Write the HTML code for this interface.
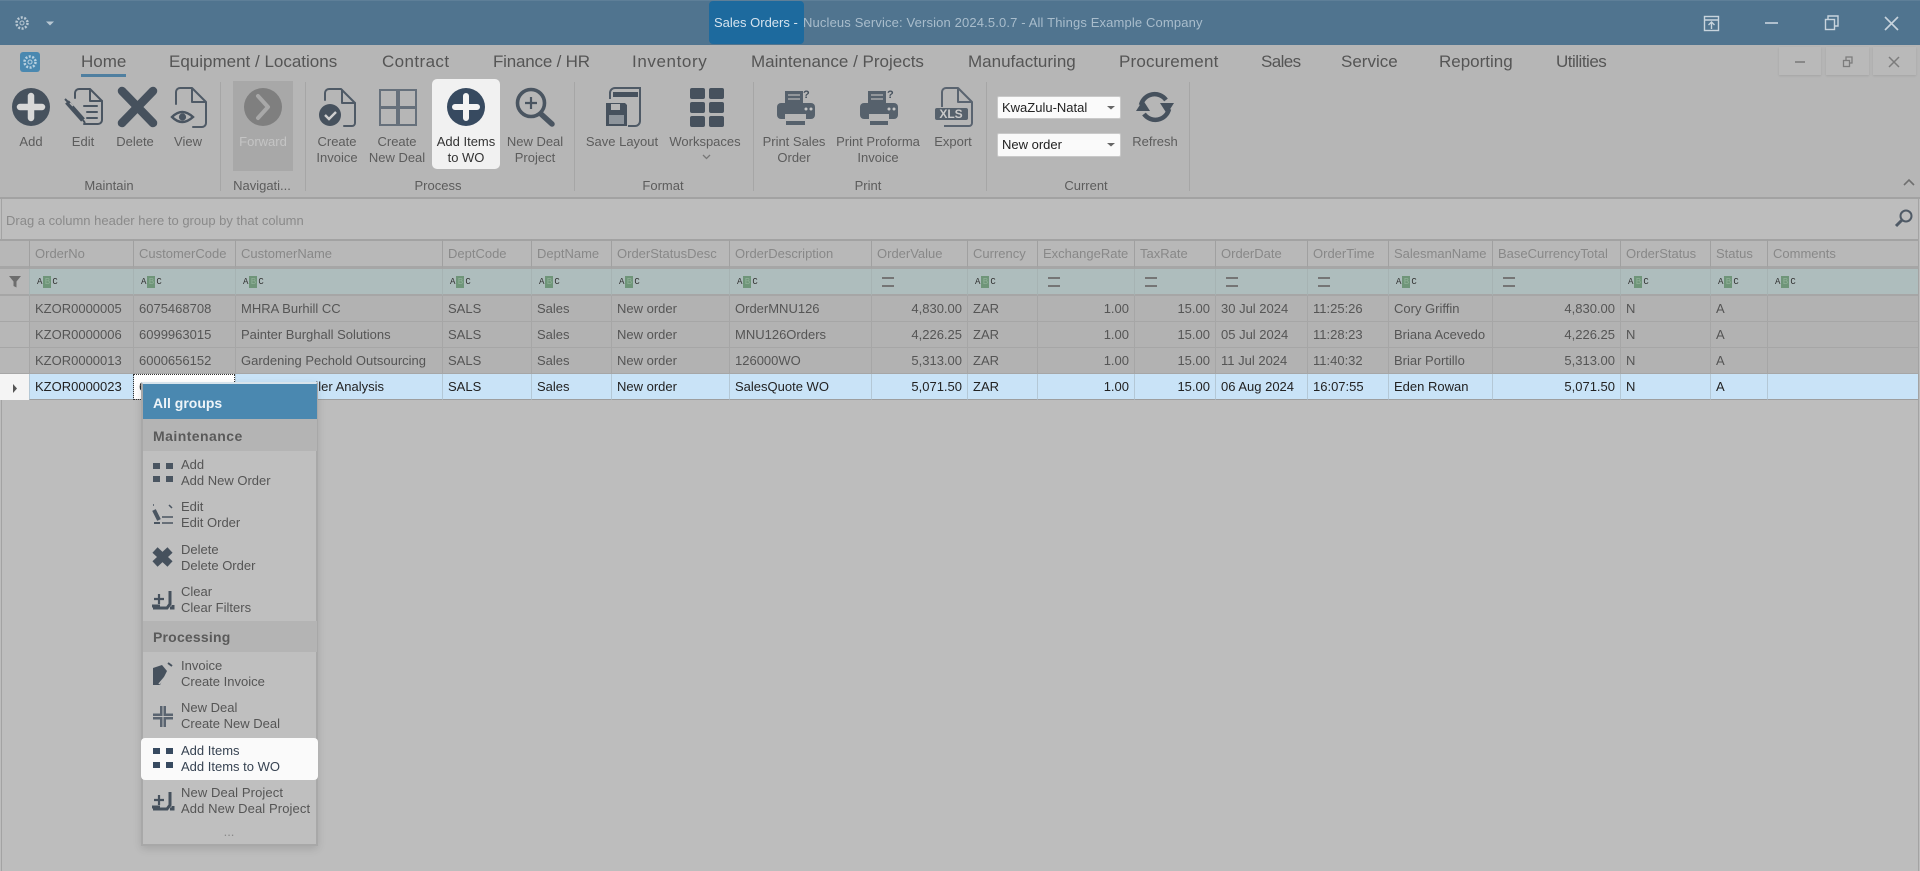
<!DOCTYPE html>
<html><head><meta charset="utf-8"><title>Sales Orders</title>
<style>
html,body{margin:0;padding:0;width:1920px;height:871px;overflow:hidden;background:#bdbdbd;font-family:"Liberation Sans",sans-serif;font-size:13px;color:#555}
div,span,svg,table,td,th{box-sizing:border-box}
.a{position:absolute;white-space:nowrap;line-height:16px}
.c{position:absolute;white-space:nowrap;line-height:16px;transform:translateX(-50%);text-align:center}
.tab{position:absolute;top:52px;font-size:17px;line-height:20px;color:#555;white-space:nowrap}
.g{color:#5c5c5c}
.sep{position:absolute;width:1px;top:82px;height:109px;background:#a6a6a6}
table{position:absolute;left:0;top:239px;width:1918px;border-collapse:separate;border-spacing:0;table-layout:fixed}
td,th{padding:0 5px;font-weight:normal;text-align:left;white-space:nowrap;overflow:hidden;font-size:13px}
.hd th{height:30px;background:#b8b8b8;color:#888;border-top:2px solid #a2a2a2;border-bottom:3px solid #a6a6a6;border-left:1px solid #a0a0a0}
.fl td{height:27px;background:#aebdbd;border-left:1px solid #a6b3b3;border-bottom:2px solid #a6a6a6;padding-left:7px;line-height:20px}
.r td{height:26px;background:#b2b2b2;border-left:1px solid #a6a6a6;border-bottom:1px solid #a6a6a6;color:#555}
.r td.ind,.fl td.ind,.hd th.ind{background:#b7b7b7;border-left:0}
.s td{height:26px;background:#c9e3f7;border-left:1px solid #b4c8d6;border-bottom:1px solid #9e9e9e;color:#222}
.s td.ind{background:#f4f4f4;border-left:0;border-bottom:0}
.n{text-align:right}
.abc{display:inline-block;height:12px;line-height:12px;font-size:9px;font-style:normal;color:#333;font-family:"Liberation Mono",monospace;vertical-align:middle;letter-spacing:0}
.abc u{display:inline-block;width:8px;height:12px;background:#6f9579;color:#8fb097;text-decoration:none;text-align:center;margin:0 1px}
.eq{display:inline-block;width:12px;height:6px;border-top:2px solid #757575;border-bottom:2px solid #757575;margin-left:3px;vertical-align:middle}
.pop{position:absolute;left:141px;top:382px;width:177px;height:464px;background:#bfbfbf;border:2px solid #a8a8a8;border-top-color:#d8e4ec;box-shadow:0 3px 8px rgba(0,0,0,.12)}
</style></head><body>

<div style="position:absolute;left:0;top:0;width:1920px;height:45px;background:#50748f;border-top:1px solid #5e7f98"></div>
<div style="position:absolute;left:709px;top:1px;width:95px;height:43px;background:#1d6a9e;border-radius:4px"></div>
<div class="a" style="left:714px;top:15px;color:#d5e3ee">Sales Orders -</div>
<div class="a" style="left:803px;top:15px;color:#a9bdcc;letter-spacing:.14px">Nucleus Service: Version 2024.5.0.7 - All Things Example Company</div>

<div style="position:absolute;left:0;top:45px;width:1920px;height:154px;background:#b6b6b6;border-bottom:2px solid #a2a2a2"></div>
<div style="position:absolute;left:20px;top:52px;width:20px;height:20px;background:#4a88b0;border-radius:3px"></div>

<div class="tab" style="left:81px">Home</div>
<div style="position:absolute;left:81px;top:74px;width:45px;height:3px;background:#4f7fa0"></div>
<div class="tab" style="left:169px">Equipment / Locations</div>
<div class="tab" style="left:382px;letter-spacing:.4px">Contract</div>
<div class="tab" style="left:493px;letter-spacing:-.2px">Finance / HR</div>
<div class="tab" style="left:632px;letter-spacing:.6px">Inventory</div>
<div class="tab" style="left:751px">Maintenance / Projects</div>
<div class="tab" style="left:968px">Manufacturing</div>
<div class="tab" style="left:1119px;letter-spacing:.2px">Procurement</div>
<div class="tab" style="left:1261px;letter-spacing:-.6px">Sales</div>
<div class="tab" style="left:1341px">Service</div>
<div class="tab" style="left:1439px">Reporting</div>
<div class="tab" style="left:1556px;letter-spacing:-.5px">Utilities</div>

<div style="position:absolute;left:1779px;top:47px;width:42px;height:28px;background:#b9b9b9;box-shadow:0 1px 2px #a4a4a4"></div>
<div style="position:absolute;left:1826px;top:47px;width:43px;height:28px;background:#b9b9b9;box-shadow:0 1px 2px #a4a4a4"></div>
<div style="position:absolute;left:1873px;top:47px;width:43px;height:28px;background:#b9b9b9;box-shadow:0 1px 2px #a4a4a4"></div>

<div class="sep" style="left:220px"></div><div class="sep" style="left:305px"></div><div class="sep" style="left:574px"></div><div class="sep" style="left:753px"></div><div class="sep" style="left:986px"></div><div class="sep" style="left:1189px"></div>

<div style="position:absolute;left:233px;top:81px;width:60px;height:90px;background:#a8a8a8"></div>
<div style="position:absolute;left:432px;top:79px;width:68px;height:90px;background:#f1f1f1;border-radius:5px"></div>

<svg style="position:absolute;left:0;top:0" width="1920" height="200" viewBox="0 0 1920 200" fill="none">
<g stroke="#b9c8d3"><circle cx="22" cy="23" r="5.5" stroke-width="2.5" stroke-dasharray="2 1.5"/><circle cx="22" cy="23" r="2" stroke-width="1"/></g>
<path d="M46 21.5h8l-4 4z" fill="#b9c8d3"/>
<g stroke="#b7d0e0"><circle cx="30" cy="62" r="5.5" stroke-width="2.5" stroke-dasharray="2 1.5"/><circle cx="30" cy="62" r="2" stroke-width="1"/></g>
<g stroke="#c8d4dd" stroke-width="1.4">
<rect x="1704.5" y="16.5" width="14" height="14"/><path d="M1705 20h13M1711.5 29v-7M1708.5 25l3-3 3 3"/>
<path d="M1765 23h13" stroke-width="1.6"/>
<rect x="1825.5" y="19.5" width="9" height="10"/><path d="M1828 19v-3h10v10h-3"/>
<path d="M1885 17l13 13M1898 17l-13 13" stroke-width="1.6"/>
</g>
<g stroke="#7c7c7c" stroke-width="1.3">
<path d="M1795 62h10" stroke-width="1.6"/>
<rect x="1843.5" y="60.5" width="6" height="6"/><path d="M1846 60v-3h6v6h-2"/>
<path d="M1889 57l10 10M1899 57l-10 10" stroke-width="1.5"/>
</g>
<path d="M1904 185l5-5 5 5" stroke="#6f6f6f" stroke-width="1.6"/>

<circle cx="31" cy="107" r="19" fill="#46515d"/><path d="M31 96v22M20 107h22" stroke="#d8d8d8" stroke-width="6.5" stroke-linecap="round"/>
<g stroke="#4a5561" stroke-width="2" stroke-linecap="round" stroke-linejoin="round">
<path d="M75 98v-5a4 4 0 0 1 4-4h11l12 12v19a4 4 0 0 1-4 4h-14"/><path d="M90 90v11h12"/>
<path d="M84 106h13M87 112h10M87 118h10"/></g>
<path d="M67 102l16 18" stroke="#46515d" stroke-width="5"/><path d="M65 99l4 4M83 120l2 3" stroke="#46515d" stroke-width="2"/><path d="M70 103l3 3" stroke="#b6b6b6" stroke-width="1.5"/>
<path d="M122 91l31 32M153 91l-31 32" stroke="#46515d" stroke-width="8.5" stroke-linecap="round"/>
<g stroke="#4f5a66" stroke-width="2" stroke-linecap="round" stroke-linejoin="round">
<path d="M176 104V92a4 4 0 0 1 4-4h12l14 14v21a4 4 0 0 1-4 4h-9"/><path d="M192 89v13h13"/></g>
<path d="M172 117q10-10 21 0q-11 10-21 0z" stroke="#4a5561" stroke-width="2.4"/><circle cx="182.500" cy="117" r="3.600" fill="#4a5561"/>
<circle cx="263" cy="107" r="19" fill="#7f7f7f"/><path d="M258 96l10 11-10 11" stroke="#a8a8a8" stroke-width="4" stroke-linecap="round" stroke-linejoin="round"/>
<g stroke="#4f5a66" stroke-width="2" stroke-linecap="round" stroke-linejoin="round">
<path d="M325 100v-7a4 4 0 0 1 4-4h12l14 14v20a3 3 0 0 1-3 3h-8"/><path d="M342 90v13h13"/></g>
<circle cx="330" cy="115" r="11" fill="#46515d"/><path d="M325 115l4 4 7-7" stroke="#cfcfcf" stroke-width="2.4"/>
<g stroke="#66707b" stroke-width="2"><rect x="380" y="90" width="17" height="17"/><rect x="399" y="90" width="17" height="17"/><rect x="380" y="108" width="17" height="17"/><rect x="399" y="108" width="17" height="17"/></g>
<circle cx="466" cy="107" r="19" fill="#374a60"/><path d="M466 96v22M455 107h22" stroke="#f4f4f4" stroke-width="6" stroke-linecap="round"/>
<circle cx="531" cy="103" r="13.500" stroke="#4a5561" stroke-width="3.600"/><path d="M531 97v12M525 103h12" stroke="#4a5561" stroke-width="2.200"/><path d="M541 114l11 10" stroke="#4a5561" stroke-width="5.500" stroke-linecap="round"/>
<path d="M610 99v-6a5 5 0 0 1 5-5h25v33a5 5 0 0 1-5 5h-7" stroke="#4f5a66" stroke-width="2"/>
<rect x="613" y="92" width="25" height="5" fill="#46515d"/>
<path d="M606 103h19l2 2v21h-21z" fill="#46515d"/><rect x="611" y="104" width="9" height="6" fill="#b6b6b6"/><rect x="609" y="115" width="15" height="9" fill="#8d949b"/>
<g fill="#46515d"><rect x="690" y="88" width="15" height="11" rx="2"/><rect x="709" y="88" width="15" height="11" rx="2"/><rect x="690" y="102" width="15" height="11" rx="2"/><rect x="709" y="102" width="15" height="11" rx="2"/><rect x="690" y="116" width="15" height="11" rx="2"/><rect x="709" y="116" width="15" height="11" rx="2"/></g>
<path d="M703 155l3.500 3.500 3.500-3.500" stroke="#777" stroke-width="1.300"/>
<rect x="785" y="91" width="18" height="14" fill="#56616c"/><path d="M788 95h12M788 99h12" stroke="#b6b6b6" stroke-width="1.300"/><rect x="777" y="103" width="38" height="16" rx="4" fill="#56616c"/><rect x="785" y="114" width="21" height="12" fill="#b6b6b6"/><rect x="786" y="121" width="19" height="4" fill="#56616c"/><circle cx="806" cy="109" r="1.500" fill="#c5c5c5"/><circle cx="811" cy="109" r="1.500" fill="#c5c5c5"/>
<rect x="868" y="91" width="18" height="14" fill="#56616c"/><path d="M871 95h12M871 99h12" stroke="#b6b6b6" stroke-width="1.300"/><rect x="860" y="103" width="38" height="16" rx="4" fill="#56616c"/><rect x="869" y="114" width="20" height="12" fill="#b6b6b6"/><rect x="870" y="121" width="18" height="4" fill="#56616c"/><circle cx="889" cy="109" r="1.500" fill="#c5c5c5"/><circle cx="894" cy="109" r="1.500" fill="#c5c5c5"/>
<g stroke="#5a6470" stroke-width="2" stroke-linejoin="round"><path d="M942 107V92a4 4 0 0 1 4-4h12l14 14v21a3 3 0 0 1-3 3h-25"/><path d="M958 89v13h13"/></g>
<rect x="935" y="108" width="33" height="12" rx="2" fill="#56616c"/>
<path d="M1141 105a14 14 0 0 1 25-5" stroke="#46515d" stroke-width="4.500"/><path d="M1160 103h14l-7 11z" fill="#46515d"/>
<path d="M1169 109a14 14 0 0 1-25 5" stroke="#46515d" stroke-width="4.500"/><path d="M1150 111h-14l7-11z" fill="#46515d"/>
</svg>

<div class="a" style="left:803px;top:87px;font-size:11px;font-weight:bold;color:#46515d">?</div>
<div class="a" style="left:887px;top:87px;font-size:11px;font-weight:bold;color:#46515d">?</div>
<div class="c" style="left:951px;top:106px;font-size:12px;font-weight:bold;color:#c9c9c9">XLS</div>

<div class="c g" style="left:31px;top:134px">Add</div>
<div class="c g" style="left:83px;top:134px">Edit</div>
<div class="c g" style="left:135px;top:134px">Delete</div>
<div class="c g" style="left:188px;top:134px">View</div>
<div class="c" style="left:263px;top:134px;color:#c4c4c4">Forward</div>
<div class="c g" style="left:337px;top:134px">Create<br>Invoice</div>
<div class="c g" style="left:397px;top:134px">Create<br>New Deal</div>
<div class="c" style="left:466px;top:134px;color:#333">Add Items<br>to WO</div>
<div class="c g" style="left:535px;top:134px">New Deal<br>Project</div>
<div class="c g" style="left:622px;top:134px">Save Layout</div>
<div class="c g" style="left:705px;top:134px">Workspaces</div>
<div class="c g" style="left:794px;top:134px">Print Sales<br>Order</div>
<div class="c g" style="left:878px;top:134px">Print Proforma<br>Invoice</div>
<div class="c g" style="left:953px;top:134px">Export</div>
<div class="c g" style="left:1155px;top:134px">Refresh</div>

<div class="c g" style="left:109px;top:178px">Maintain</div>
<div class="c g" style="left:262px;top:178px">Navigati...</div>
<div class="c g" style="left:438px;top:178px">Process</div>
<div class="c g" style="left:663px;top:178px">Format</div>
<div class="c g" style="left:868px;top:178px">Print</div>
<div class="c g" style="left:1086px;top:178px">Current</div>

<div style="position:absolute;left:997px;top:96px;width:124px;height:23px;background:#fafafa;border:1px solid #c9c9c9;border-radius:2px"></div>
<div class="a" style="left:1002px;top:100px;color:#222">KwaZulu-Natal</div>
<div style="position:absolute;left:997px;top:133px;width:124px;height:24px;background:#fafafa;border:1px solid #c9c9c9;border-radius:2px"></div>
<div class="a" style="left:1002px;top:137px;color:#222">New order</div>
<svg style="position:absolute;left:1105px;top:100px" width="12" height="50"><path d="M2 6h8l-4 3.500zM2 43h8l-4 3.500z" fill="#666"/></svg>

<div class="a" style="left:6px;top:213px;color:#8a8a8a">Drag a column header here to group by that column</div>
<svg style="position:absolute;left:1893px;top:208px" width="22" height="21" fill="none"><circle cx="13" cy="8" r="5.500" stroke="#4f5a66" stroke-width="2"/><path d="M9 12l-6 6" stroke="#4f5a66" stroke-width="3"/></svg>
<div style="position:absolute;left:1px;top:199px;width:1px;height:672px;background:#a3a3a3"></div>
<div style="position:absolute;left:1918px;top:199px;width:1px;height:672px;background:#a3a3a3"></div>

<table>
<colgroup><col style="width:29px"><col style="width:104px"><col style="width:102px"><col style="width:207px"><col style="width:89px"><col style="width:80px"><col style="width:118px"><col style="width:142px"><col style="width:96px"><col style="width:70px"><col style="width:97px"><col style="width:81px"><col style="width:92px"><col style="width:81px"><col style="width:104px"><col style="width:128px"><col style="width:90px"><col style="width:57px"><col style="width:151px"></colgroup>
<tr class="hd"><th class="ind"></th><th>OrderNo</th><th>CustomerCode</th><th>CustomerName</th><th>DeptCode</th><th>DeptName</th><th>OrderStatusDesc</th><th>OrderDescription</th><th>OrderValue</th><th>Currency</th><th>ExchangeRate</th><th>TaxRate</th><th>OrderDate</th><th>OrderTime</th><th>SalesmanName</th><th>BaseCurrencyTotal</th><th>OrderStatus</th><th>Status</th><th>Comments</th></tr>
<tr class="fl"><td class="ind"></td>
<td><i class="abc">A<u>B</u>C</i></td><td><i class="abc">A<u>B</u>C</i></td><td><i class="abc">A<u>B</u>C</i></td><td><i class="abc">A<u>B</u>C</i></td><td><i class="abc">A<u>B</u>C</i></td><td><i class="abc">A<u>B</u>C</i></td><td><i class="abc">A<u>B</u>C</i></td><td><i class="eq"></i></td><td><i class="abc">A<u>B</u>C</i></td><td><i class="eq"></i></td><td><i class="eq"></i></td><td><i class="eq"></i></td><td><i class="eq"></i></td><td><i class="abc">A<u>B</u>C</i></td><td><i class="eq"></i></td><td><i class="abc">A<u>B</u>C</i></td><td><i class="abc">A<u>B</u>C</i></td><td><i class="abc">A<u>B</u>C</i></td></tr>
<tr class="r"><td class="ind"></td><td>KZOR0000005</td><td>6075468708</td><td>MHRA Burhill CC</td><td>SALS</td><td>Sales</td><td>New order</td><td>OrderMNU126</td><td class="n">4,830.00</td><td>ZAR</td><td class="n">1.00</td><td class="n">15.00</td><td>30 Jul 2024</td><td>11:25:26</td><td>Cory Griffin</td><td class="n">4,830.00</td><td>N</td><td>A</td><td></td></tr>
<tr class="r"><td class="ind"></td><td>KZOR0000006</td><td>6099963015</td><td>Painter Burghall Solutions</td><td>SALS</td><td>Sales</td><td>New order</td><td>MNU126Orders</td><td class="n">4,226.25</td><td>ZAR</td><td class="n">1.00</td><td class="n">15.00</td><td>05 Jul 2024</td><td>11:28:23</td><td>Briana Acevedo</td><td class="n">4,226.25</td><td>N</td><td>A</td><td></td></tr>
<tr class="r"><td class="ind"></td><td>KZOR0000013</td><td>6000656152</td><td>Gardening Pechold Outsourcing</td><td>SALS</td><td>Sales</td><td>New order</td><td>126000WO</td><td class="n">5,313.00</td><td>ZAR</td><td class="n">1.00</td><td class="n">15.00</td><td>11 Jul 2024</td><td>11:40:32</td><td>Briar Portillo</td><td class="n">5,313.00</td><td>N</td><td>A</td><td></td></tr>
<tr class="s"><td class="ind"></td><td>KZOR0000023</td><td style="background:#fff;outline:1px dotted #333;outline-offset:-1px">6000123456</td><td style="text-align:right;padding-right:58px">Retailer Analysis</td><td>SALS</td><td>Sales</td><td>New order</td><td>SalesQuote WO</td><td class="n">5,071.50</td><td>ZAR</td><td class="n">1.00</td><td class="n">15.00</td><td>06 Aug 2024</td><td>16:07:55</td><td>Eden Rowan</td><td class="n">5,071.50</td><td>N</td><td>A</td><td></td></tr>
</table>
<svg style="position:absolute;left:0;top:270px" width="30" height="130"><path d="M9 6h12l-4.500 5.500v6l-3 -1.500v-4.500z" fill="#6d6d6d"/><path d="M13 114v9l4-4.500z" fill="#555"/></svg>

<div class="pop"></div>
<div style="position:absolute;left:143px;top:384px;width:174px;height:35px;background:#4a88b0"></div>
<div class="a" style="left:153px;top:395px;font-size:14px;font-weight:bold;color:#eef4f8">All groups</div>
<div style="position:absolute;left:143px;top:419px;width:174px;height:32px;background:#b4b4b4"></div>
<div class="a" style="left:153px;top:428px;font-size:14px;font-weight:bold;letter-spacing:.45px;color:#5a5a5a">Maintenance</div>
<div style="position:absolute;left:143px;top:621px;width:174px;height:31px;background:#b4b4b4"></div>
<div class="a" style="left:153px;top:629px;font-size:14px;font-weight:bold;letter-spacing:.2px;color:#5a5a5a">Processing</div>
<div style="position:absolute;left:141px;top:738px;width:177px;height:42px;background:#fafafa;border-radius:4px"></div>

<div class="a" style="left:181px;top:457px">Add<br>Add New Order</div>
<div class="a" style="left:181px;top:499px">Edit<br>Edit Order</div>
<div class="a" style="left:181px;top:542px">Delete<br>Delete Order</div>
<div class="a" style="left:181px;top:584px">Clear<br>Clear Filters</div>
<div class="a" style="left:181px;top:658px">Invoice<br>Create Invoice</div>
<div class="a" style="left:181px;top:700px">New Deal<br>Create New Deal</div>
<div class="a" style="left:181px;top:743px;color:#374352">Add Items<br>Add Items to WO</div>
<div class="a" style="left:181px;top:785px;letter-spacing:.1px">New Deal Project<br>Add New Deal Project</div>
<div class="c" style="left:229px;top:824px;color:#8a8a8a">...</div>

<svg style="position:absolute;left:145px;top:455px" width="36" height="370" fill="none">
<g fill="#4a5561"><rect x="8" y="8" width="7" height="6"/><rect x="21" y="8" width="7" height="6"/><rect x="8" y="21" width="7" height="6"/><rect x="21" y="21" width="7" height="6"/></g>
<path d="M8 50h1M24 50l3 3" stroke="#4a5561" stroke-width="1.500"/><path d="M9 55l5 10" stroke="#4a5561" stroke-width="4"/><path d="M17 62h11M17 68h11" stroke="#4a5561" stroke-width="1.500"/><path d="M9 68h6" stroke="#4a5561" stroke-width="2"/>
<path d="M10 95l15 14M25 95l-15 14" stroke="#46515d" stroke-width="7.500"/>
<path d="M14 139v10M9 144h10" stroke="#46515d" stroke-width="2.200"/><path d="M25 136v13l-3 4H8M25 153h3v-3" stroke="#46515d" stroke-width="3"/><path d="M7 151h8" stroke="#46515d" stroke-width="3"/>
<path d="M8 213l9-3 5 6-7 14H8z" fill="#46515d"/><path d="M14 229l6-7" stroke="#bfbfbf" stroke-width="1.600"/><path d="M23 208l4 3" stroke="#46515d" stroke-width="2"/>
<path d="M18 251v21M8 261.500h20" stroke="#5a6470" stroke-width="6"/><path d="M8 261.500h20M18 251v21" stroke="#bfbfbf" stroke-width="1"/>
<g fill="#374a60"><rect x="8" y="293" width="7" height="6"/><rect x="21" y="293" width="7" height="6"/><rect x="8" y="307" width="7" height="6"/><rect x="21" y="307" width="7" height="6"/></g>
<path d="M14 340v10M9 345h10" stroke="#46515d" stroke-width="2.200"/><path d="M25 337v13l-3 4H8M25 354h3v-3" stroke="#46515d" stroke-width="3"/><path d="M7 352h8" stroke="#46515d" stroke-width="3"/>
</svg>
</body></html>
